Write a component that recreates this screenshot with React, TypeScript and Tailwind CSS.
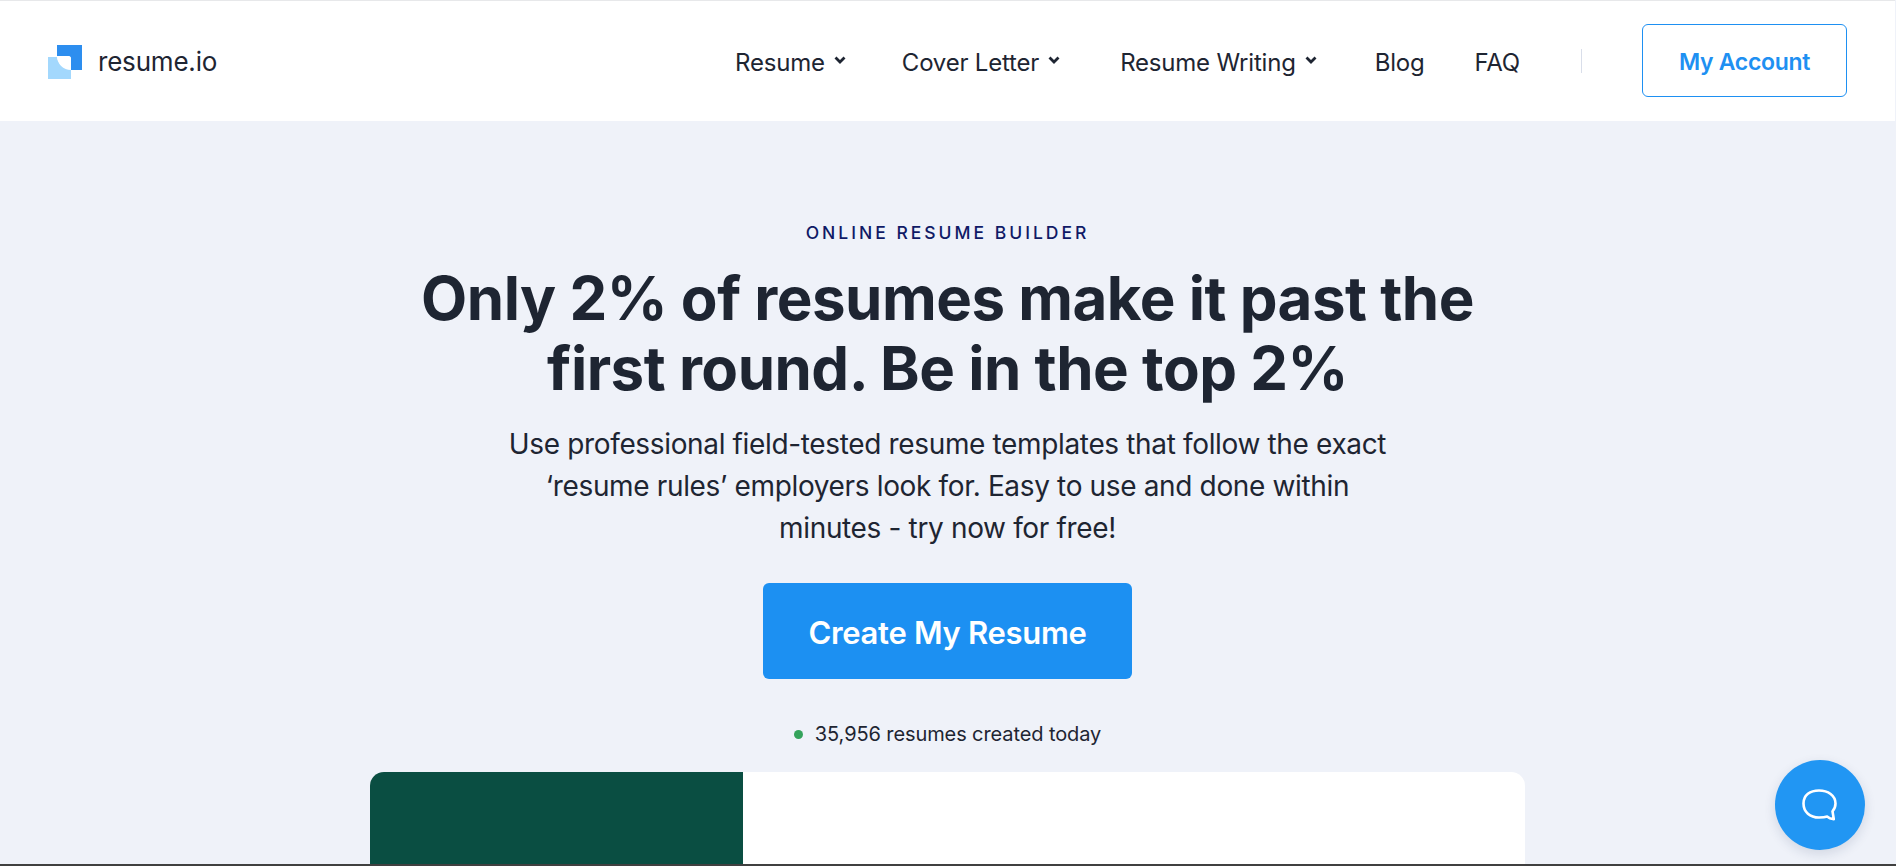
import React from "react";

const font = { fontFamily: "Inter, sans-serif" };

function Chevron() {
  return (
    <svg width="12" height="9" viewBox="0 0 12 9" className="mt-[-5px]" aria-hidden="true">
      <path d="M1.500 1.500 6 6 10.500 1.500" fill="none" stroke="#1e2532" strokeWidth="2.800" />
    </svg>
  );
}

function NavItem({ label, menu, className }: { label: string; menu?: boolean; className: string }) {
  return (
    <a className={`flex items-center gap-[9px] pt-[4px] text-[24px] font-normal tracking-[-0.2px] text-[#1e2532] ${className}`}>
      {label}
      {menu && <Chevron />}
    </a>
  );
}

export default function App() {
  return (
    <div className="flex h-[866px] w-full flex-col overflow-hidden bg-[#eff2f9]" style={font}>
      <header className="flex h-[121px] w-[1895px] shrink-0 items-center justify-between border-t border-[#e7e8ea] bg-white pr-[48px] pl-[48px]">
        <div className="flex items-center gap-[14px] pt-[2px]">
          <svg width="36" height="34" viewBox="0 0 36 34" aria-hidden="true">
            <path d="M0 12h9a14 14 0 0 0 14 12v10H0z" fill="#a3d8fd" />
            <path d="M9 0h25v25H23V14a3 3 0 0 0-3-3H9z" fill="#2d8eef" />
            <path d="M9 11h11a3 3 0 0 1 3 3v11A14 14 0 0 1 9 11z" fill="#fff" />
          </svg>
          <span className="mt-[-2px] text-[26px] font-normal tracking-[-0.200px] text-[#1e2532]">resume.io</span>
        </div>
        <nav className="mb-[1px] flex items-center">
          <NavItem label="Resume" menu className="mr-[56px]" />
          <NavItem label="Cover Letter" menu className="mr-[60px]" />
          <NavItem label="Resume Writing" menu className="mr-[58px]" />
          <NavItem label="Blog" className="mr-[50px]" />
          <NavItem label="FAQ" className="mr-[61px]" />
          <div className="mr-[60px] h-[24px] w-px bg-[#d9deea]" />
          <a className="flex h-[73px] w-[205px] items-center justify-center rounded-[6px] border border-[#1e90f2] pt-[4px] text-[23px] font-semibold tracking-[-0.300px] text-[#1e90f2]">
            My Account
          </a>
        </nav>
      </header>

      <main className="relative flex min-h-0 w-[1895px] flex-1 flex-col items-center">
        <p className="mt-[102px] text-[17.500px] leading-[20px] font-medium tracking-[3px] text-[#0f1a66]">ONLINE RESUME BUILDER</p>
        <h1 className="mt-[20px] text-center text-[60px] leading-[70px] font-bold tracking-[-0.500px] text-[#1e2532]">
          Only 2% of resumes make it past the
          <br />
          first round. Be in the top 2%
        </h1>
        <p className="mt-[20px] text-center text-[28px] leading-[42px] font-normal tracking-[-0.350px] text-[#1e2532]">
          Use professional field-tested resume templates that follow the exact
          <br />
          ‘resume rules’ employers look for. Easy to use and done within
          <br />
          minutes - try now for free!
        </p>
        <button className="mt-[34px] h-[96px] w-[369px] rounded-[6px] bg-[#1c90f2] pt-[5px] text-[31px] font-semibold tracking-[-0.300px] text-white">
          Create My Resume
        </button>
        <div className="mt-[43px] flex h-[24px] items-center gap-[12px] text-[20px] font-normal tracking-[-0.100px] text-[#1e2532]">
          <span className="h-[9px] w-[9px] rounded-full bg-[#34a35c]" />
          35,956 resumes created today
        </div>
        <div className="mt-[26px] flex w-[1155px] flex-1 overflow-hidden rounded-t-[14px] bg-white">
          <div className="w-[373px] bg-[#0a4e42]" />
        </div>
        <div className="absolute top-[639px] right-[30px] flex h-[90px] w-[90px] items-center justify-center rounded-full bg-[#2196f3] shadow-[0_4px_12px_rgba(30,50,90,0.14)]">
          <svg width="38" height="34" viewBox="0 0 38 34" aria-hidden="true">
            <path
              d="M18 2.500c9 0 16.500 5 16.500 13 0 3-1 5.600-3 7.800l1.300 7.800c-2.600-.1-5-.9-6.500-2.600-2.400.8-5.200 1-8.300 1C9 29.500 2.500 24 2.500 15.500S9 2.500 18 2.500z"
              fill="none"
              stroke="#fff"
              strokeWidth="2.600"
              strokeLinejoin="round"
            />
          </svg>
        </div>
      </main>
      <div className="h-[2px] shrink-0 bg-[#404040]" />
    </div>
  );
}
